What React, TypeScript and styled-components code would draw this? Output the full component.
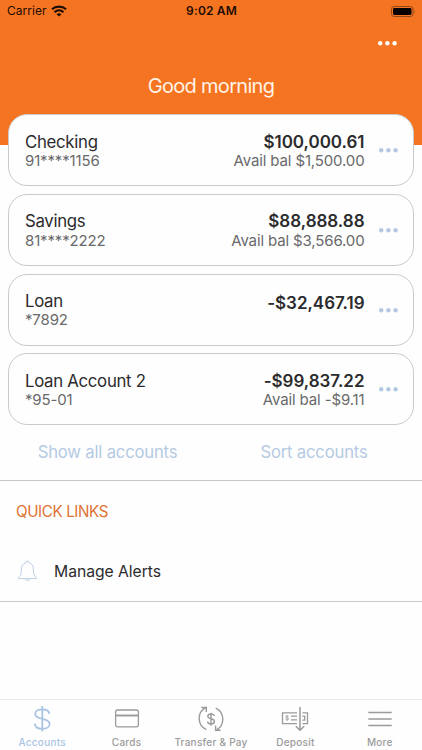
import React from "react";
import styled, { createGlobalStyle } from "styled-components";

const Global = createGlobalStyle`
  *{box-sizing:border-box}
  body{margin:0;background:#fff;font-family:Inter,"Liberation Sans",sans-serif;color:#2b2b2d;overflow:hidden}
  button{border:0;background:none;padding:0;margin:0;font:inherit;color:inherit;letter-spacing:inherit}
`;

const Screen = styled.div`
  width:422px;height:750px;display:flex;flex-direction:column;
  background:linear-gradient(#f57421 0 145px,#fefefe 145px);
`;
const StatusBar = styled.header`
  height:22px;padding:0 6px 0 7px;display:grid;grid-template-columns:1fr auto 1fr;align-items:center;color:#1c0d04;
`;
const Carrier = styled.div`
  display:flex;align-items:center;gap:4.5px;font-size:12px;letter-spacing:.02px;line-height:22px;
`;
const Clock = styled.div`font-size:12px;font-weight:600;letter-spacing:.15px;line-height:22px;`;
const BatterySlot = styled.div`display:flex;justify-content:flex-end;`;
const Toolbar = styled.div`height:42px;padding:0 25px 1px;display:flex;justify-content:flex-end;align-items:center;color:#fff;`;
const DotsButton = styled.button`display:flex;`;
const Greeting = styled.h1`
  margin:0;height:50px;padding-top:8px;text-align:center;color:#fff3e6;font-size:20px;font-weight:400;line-height:28px;letter-spacing:-.7px;
`;
const AccountList = styled.main`display:flex;flex-direction:column;gap:7.75px;padding:0 8px;`;
const AccountCard = styled.article`
  height:72px;border:1px solid #cbcbcd;border-radius:19px;background:#fefefe;padding:0 15px 0 16px;display:flex;align-items:center;
`;
const Side = styled.div<{ $end?: boolean }>`
  display:flex;flex-direction:column;${p => p.$end ? "align-items:flex-end;margin-left:auto;margin-right:14.5px;" : ""}
`;
const Name = styled.div`font-size:16.8px;line-height:20px;letter-spacing:-.3px;margin:1.6px 0 .4px;white-space:nowrap;`;
const Detail = styled.div`
  height:18px;font-size:15px;line-height:18px;color:#69696b;letter-spacing:-.14px;white-space:nowrap;
`;
const Amount = styled.div<{ $lower?: boolean }>`
  font-size:17px;font-weight:600;line-height:20px;margin:1.6px 0 .4px;letter-spacing:-.03px;white-space:nowrap;
  ${p => p.$lower ? "padding-top:2px;margin-bottom:-1.6px;" : ""}
`;
const Actions = styled.div`
  height:55px;padding-bottom:1px;display:grid;grid-template-columns:215px 198px;align-items:center;justify-items:center;color:#b5cae3;font-size:16.7px;letter-spacing:-.2px;
`;
const Divider = styled.div`height:1px;background:#c9c9cb;flex-shrink:0;`;
const QuickLinks = styled.section`height:121px;border-bottom:1px solid #c9c9cb;display:flex;flex-direction:column;`;
const SectionTitle = styled.h2`margin:0;padding:20px 16px 0;font-size:15.2px;line-height:22px;font-weight:400;color:#df7231;letter-spacing:-.4px;`;
const LinkRow = styled.button`
  margin-top:28px;padding-left:17px;height:40px;display:flex;align-items:center;gap:16px;font-size:15.7px;letter-spacing:-.03px;text-align:left;
`;
const TabBar = styled.nav`
  margin-top:auto;height:51px;border-top:1px solid #ececed;display:grid;grid-template-columns:repeat(5,1fr);padding-top:5px;
`;
const Tab = styled.button<{ $active?: boolean }>`
  display:flex;flex-direction:column;align-items:center;color:${p => p.$active ? "#aac4e3" : "#9b9b9c"};
`;
const TabLabel = styled.span`font-size:10px;line-height:14px;margin-top:1px;letter-spacing:.25px;font-weight:500;white-space:nowrap;`;

const Dots = ({ color = "#b3c9e2" }: { color?: string }) => (
  <svg width="19" height="6" viewBox="0 0 19 6" fill={color}>
    <circle cx="2.2" cy="3.2" r="2.2" /><circle cx="9.4" cy="3.2" r="2.2" /><circle cx="16.6" cy="3.2" r="2.2" />
  </svg>
);
const Wifi = () => (
  <svg width="16" height="12" viewBox="0 0 16 12" fill="none" stroke="currentColor" strokeWidth="2.2">
    <path d="M1 4.3C4.8.8 11.2.8 15 4.3" /><path d="M3.5 7.2c2.6-2.4 6.4-2.4 9 0" />
    <path d="M5.6 9.2c1.4-1.2 3.4-1.2 4.8 0L8 11.6Z" fill="currentColor" stroke="none" />
  </svg>
);
const Battery = () => (
  <svg width="25" height="11" viewBox="0 0 25 11">
    <rect x=".5" y=".5" width="21.5" height="10" rx="2.7" fill="none" stroke="#8f491b" />
    <rect x="2" y="2" width="18.5" height="7" rx="1.4" fill="#050200" /><path d="M23.3 3.8q1.5 1.7 0 3.4z" fill="#8f491b" />
  </svg>
);
const Bell = () => (
  <svg width="21" height="22" viewBox="0 0 21 22" fill="none" stroke="#bdd0e6" strokeWidth="1">
    <path d="M9 2.8V1.6q1.3-1.2 2.8 0v1.2c3.3.8 4.6 3.2 4.6 6.8 0 4.7.8 6.5 3.2 8.2v.8H1.2v-.8c2.4-1.7 3.2-3.5 3.2-8.2 0-3.6 1.3-6 4.6-6.8Z" />
    <path d="M8.3 18.7q.2 1.8 2.1 1.8t2.1-1.8" />
  </svg>
);

const line = { fill: "none", stroke: "currentColor" };
const icons: Record<string, React.ReactNode> = {
  Accounts: (
    <svg width="28" height="29" viewBox="0 0 28 29" {...line} strokeWidth="1.8">
      <path d="M14.3 1v25.5M21.3 8.8C21 5.8 18.2 4.3 14.3 4.3S7.2 6 7.2 8.9c0 3.2 3.1 4 7.1 4.9 4.5 1 7.4 2 7.4 5.2 0 3-3.2 4.9-7.4 4.9s-7.3-1.7-7.6-5.2" />
    </svg>
  ),
  Cards: (
    <svg width="28" height="29" viewBox="0 0 28 29" {...line} strokeWidth="1.3">
      <rect x="2.6" y="5" width="22.8" height="16.8" rx="2" /><path d="M2.6 10.5h22.8" strokeWidth="1.9" />
    </svg>
  ),
  "Transfer & Pay": (
    <svg width="28" height="29" viewBox="0 0 28 29" {...line} strokeWidth="1.4">
      <path d="M9.3 24.7C-.1 20-.1 7.5 8.6 2.7M4.3 2.5h5v4.6M18.7 3.1c9.3 4.5 9.3 17 1 21.8M23.6 25.2h-5v-4.8" />
      <path d="M14 7.7v13M17.2 11c-.2-1.2-1.4-2-3.2-2s-3.2.9-3.2 2.3c0 1.5 1.4 2 3.2 2.5 2.1.5 3.4 1.1 3.4 2.7 0 1.5-1.4 2.5-3.4 2.5s-3.3-.9-3.5-2.4" />
    </svg>
  ),
  Deposit: (
    <svg width="30" height="29" viewBox="0 0 30 29" {...line} strokeWidth="1.3">
      <path d="M17 7.9H2.5v10.7H17M22.5 7.9h5v10.7h-5M11 11.2h6M11 14.9h6M22.3 11.2h2.4v4h-2.4" />
      <path d="M8.7 11.3c-1.3-.8-3-.5-3 .5 0 1.4 3 .7 3 2.1 0 1-2 1.2-3.2.4M7.1 10v6" strokeWidth=".8" />
      <path d="M20 2v23.2M15.8 21.3l4.2 4 4.2-4" strokeWidth="1.5" />
    </svg>
  ),
  More: (
    <svg width="28" height="29" viewBox="0 0 28 29" {...line} strokeWidth="1.3">
      <path d="M2.3 7.5h23.4M2.3 14h23.4M2.3 20.5h23.4" />
    </svg>
  ),
};

const accounts = [
  { name: "Checking", number: "91****1156", amount: "$100,000.61", available: "Avail bal $1,500.00" },
  { name: "Savings", number: "81****2222", amount: "$88,888.88", available: "Avail bal $3,566.00" },
  { name: "Loan", number: "*7892", amount: "-$32,467.19", available: "" },
  { name: "Loan Account 2", number: "*95-01", amount: "-$99,837.22", available: "Avail bal -$9.11" },
];

export default function App() {
  return (
    <Screen>
      <Global />
      <StatusBar>
        <Carrier>Carrier <Wifi /></Carrier><Clock>9:02 AM</Clock><BatterySlot><Battery /></BatterySlot>
      </StatusBar>
      <Toolbar><DotsButton aria-label="Options"><Dots color="#fff" /></DotsButton></Toolbar>
      <Greeting>Good morning</Greeting>
      <AccountList>
        {accounts.map(a => (
          <AccountCard key={a.name}>
            <Side><Name>{a.name}</Name><Detail>{a.number}</Detail></Side>
            <Side $end><Amount $lower={!a.available}>{a.amount}</Amount><Detail>{a.available}</Detail></Side>
            <Dots />
          </AccountCard>
        ))}
      </AccountList>
      <Actions><button>Show all accounts</button><button>Sort accounts</button></Actions>
      <Divider />
      <QuickLinks>
        <SectionTitle>QUICK LINKS</SectionTitle>
        <LinkRow><Bell />Manage Alerts</LinkRow>
      </QuickLinks>
      <TabBar>
        {Object.entries(icons).map(([label, icon]) => (
          <Tab key={label} $active={label === "Accounts"}>{icon}<TabLabel>{label}</TabLabel></Tab>
        ))}
      </TabBar>
    </Screen>
  );
}
